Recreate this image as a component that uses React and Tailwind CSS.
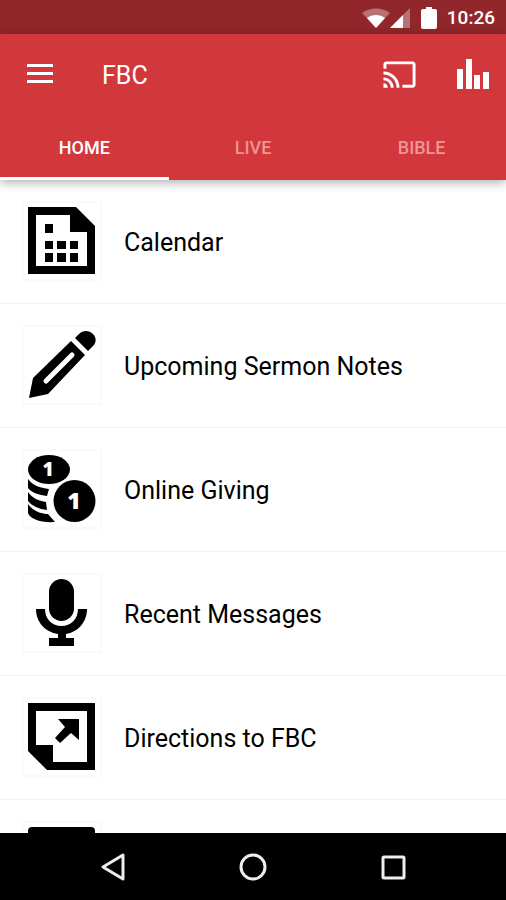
import { MdCast } from "react-icons/md";

function CalendarIcon() {
  return (
    <svg viewBox="0 0 68 68" className="size-[68px]" aria-hidden="true">
      <path fillRule="evenodd" d="M0 0H48L67 19V67H0ZM8 8V59H59V25H42V8Z" />
      <path d="M17 17h8v9h-8zM17 34h8v8h-8zM29 34h9v8h-9zM42 34h8v8h-8zM17 46h8v9h-8zM29 46h9v9h-9zM42 46h8v9h-8z" />
    </svg>
  );
}

function PencilIcon() {
  return (
    <svg viewBox="0 0 68 68" className="size-[68px]" aria-hidden="true">
      <path d="M1 67L5 47L43 10L57 24L20 63Z" />
      <path d="M47 7L51 3C55 -1 61 -1 65 3C69 7 68 12 65 15L60 20Z" />
      <path d="M44 24L18 50" stroke="white" strokeWidth="5" strokeLinecap="round" />
    </svg>
  );
}

function CoinsIcon() {
  return (
    <svg viewBox="0 0 68 68" className="size-[68px]" aria-hidden="true">
      <path d="M0 24C4 30 12 33 21 34L19 41C11 40 4 38 0 33Z" />
      <path d="M0 37C4 43 11 46 18 47L19 55C11 54 4 51 0 46Z" />
      <path d="M0 49C4 55 12 59 20 59L27 67C13 68 2 64 0 58Z" />
      <ellipse cx="21" cy="14.5" rx="21" ry="14.5" />
      <circle cx="46.5" cy="46" r="21" />
      <text x="20" y="21" textAnchor="middle" className="fill-white font-['Open_Sans',sans-serif] text-[19px] font-extrabold">1</text>
      <text x="46" y="54" textAnchor="middle" className="fill-white font-['Open_Sans',sans-serif] text-[23px] font-extrabold">1</text>
    </svg>
  );
}

function MicIcon() {
  return (
    <svg viewBox="0 0 68 68" className="size-[68px]" aria-hidden="true">
      <rect x="21" y="0" width="25" height="42" rx="12.5" />
      <path d="M8 30H17C17 40 24 47 33.5 47S50 40 50 30H59C59 43 50 53 38 55V59H46V67H21V59H30V55C17 53 8 43 8 30Z" />
    </svg>
  );
}

function DirectionsIcon() {
  return (
    <svg viewBox="0 0 68 68" className="size-[68px]" aria-hidden="true">
      <path fillRule="evenodd" d="M0 0H67V67H19L0 48ZM8 8V42H25V59H59V8Z" />
      <path d="M30 16H51V37L43 30L32 40L27 35L37 24Z" />
    </svg>
  );
}

function CardIcon() {
  return (
    <svg viewBox="0 0 68 68" className="size-[68px]" aria-hidden="true">
      <rect width="67" height="67" rx="4" />
    </svg>
  );
}

const items = [
  { label: "Calendar", Icon: CalendarIcon },
  { label: "Upcoming Sermon Notes", Icon: PencilIcon },
  { label: "Online Giving", Icon: CoinsIcon },
  { label: "Recent Messages", Icon: MicIcon },
  { label: "Directions to FBC", Icon: DirectionsIcon },
  { label: "", Icon: CardIcon },
];

function StatusBar() {
  return (
    <div className="flex h-[34px] shrink-0 items-center justify-end bg-[#92272b] pt-[2px] pr-[11px] text-white">
      <svg viewBox="0 0 28 20" className="h-5 w-7" aria-hidden="true">
        <path d="M0 5C8 -1 20 -1 28 5L14 20Z" fill="white" fillOpacity="0.35" />
        <path d="M5 10C10 6 18 6 23 10L14 20Z" fill="white" />
      </svg>
      <svg viewBox="0 0 20 20" className="size-5" aria-hidden="true">
        <path d="M0 20L20 0V20Z" fill="white" fillOpacity="0.35" />
        <path d="M0 20L13 7V20Z" fill="white" />
      </svg>
      <svg viewBox="0 0 16 22" className="ml-[11px] h-[22px] w-4" aria-hidden="true">
        <path d="M5 0H11V2H14Q16 2 16 4V20Q16 22 14 22H2Q0 22 0 20V4Q0 2 2 2H5Z" fill="white" />
      </svg>
      <time className="ml-[10px] text-[19px] leading-6 font-medium">10:26</time>
    </div>
  );
}

export default function App() {
  return (
    <div className="flex h-screen flex-col overflow-hidden bg-white font-['Roboto',sans-serif] text-black">
      <StatusBar />
      <header className="z-10 shrink-0 bg-[#d2373b] text-white shadow-[0_2px_10px_rgba(0,0,0,0.35)]">
        <div className="flex h-20 items-center pr-[17px] pl-[27px]">
          <button type="button" aria-label="Menu">
            <svg viewBox="0 0 26 20" className="h-5 w-[26px]" aria-hidden="true">
              <path d="M0 0h26v3H0zM0 8h26v3H0zM0 16h26v3H0z" fill="white" />
            </svg>
          </button>
          <h1 className="ml-[49px] pt-[3px] text-[25px] leading-8">FBC</h1>
          <button type="button" aria-label="Cast" className="ml-auto">
            <MdCast className="size-[35px]" />
          </button>
          <button type="button" aria-label="Playback" className="ml-10">
            <svg viewBox="0 0 32 30" className="h-[30px] w-8" aria-hidden="true">
              <path d="M0 10h6v20H0zM9 0h6v30H9zM17 16h6v14h-6zM26 13h6v17h-6z" fill="white" />
            </svg>
          </button>
        </div>
        <nav className="grid h-[66px] grid-cols-3 text-[18px] leading-6 font-medium">
          <a href="#home" aria-current="page" className="flex items-center justify-center border-b-[3px] border-b-white pt-[5px]">
            HOME
          </a>
          <a href="#live" className="flex items-center justify-center pt-[2px] text-[#ee9597]">LIVE</a>
          <a href="#bible" className="flex items-center justify-center pt-[2px] text-[#ee9597]">BIBLE</a>
        </nav>
      </header>
      <main className="min-h-0 flex-1 overflow-hidden">
        <ul>
          {items.map(({ label, Icon }, i) => (
            <li key={i} className="border-b border-[#f3f3f3]">
              <a href="#item" className="flex h-[123px] items-center pb-px pl-[22px]">
                <span className="flex size-20 items-start justify-start border-2 border-[#fafafa] p-1">
                  <Icon />
                </span>
                <span className="ml-[22px] pt-[4px] text-[25px] leading-8">{label}</span>
              </a>
            </li>
          ))}
        </ul>
      </main>
      <footer className="grid h-[67px] shrink-0 grid-cols-3 items-center justify-items-center bg-black px-[43px]">
        <button type="button" aria-label="Back">
          <svg viewBox="0 0 26 28" className="h-7 w-[26px]" fill="none" stroke="#eeeeee" strokeWidth="3" strokeLinejoin="round" aria-hidden="true">
            <path d="M3 14L23 2V26Z" />
          </svg>
        </button>
        <button type="button" aria-label="Home">
          <svg viewBox="0 0 28 28" className="size-7" fill="none" stroke="#eeeeee" strokeWidth="3" aria-hidden="true">
            <circle cx="14" cy="14" r="12" />
          </svg>
        </button>
        <button type="button" aria-label="Overview">
          <svg viewBox="0 0 28 28" className="size-7" fill="none" stroke="#eeeeee" strokeWidth="3" strokeLinejoin="round" aria-hidden="true">
            <rect x="4" y="4" width="21" height="21" rx="1" />
          </svg>
        </button>
      </footer>
    </div>
  );
}
